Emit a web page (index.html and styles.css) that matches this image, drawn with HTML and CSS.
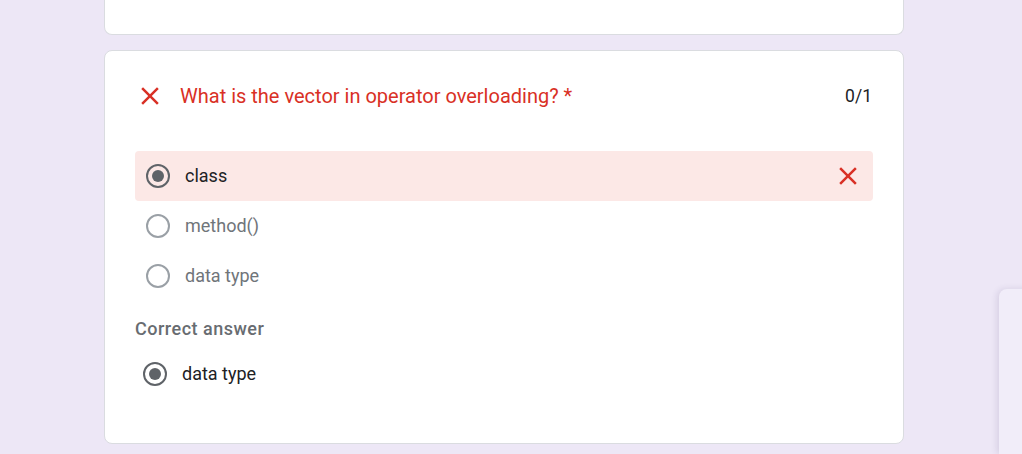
FILE: index.html
```html
<!DOCTYPE html>
<html>
<head>
<meta charset="utf-8">
<link rel="stylesheet" href="styles.css">
</head>
<body>
<div class="page">
  <div class="column">
    <div class="card card-prev"></div>
    <div class="card question">
      <div class="q-head">
        <svg class="x-icon" width="30" height="30" viewBox="0 0 24 24"><path d="M19 6.41L17.59 5 12 10.59 6.41 5 5 6.41 10.59 12 5 17.59 6.41 19 12 13.41 17.59 19 19 17.59 13.41 12z" fill="#d93025"/></svg>
        <div class="q-title">What is the vector in operator overloading? *</div>
        <div class="q-score">0/1</div>
      </div>
      <div class="options">
        <div class="opt opt-wrong">
          <span class="radio radio-on"></span>
          <span class="opt-text dark">class</span>
          <svg class="x-icon x-right" width="30" height="30" viewBox="0 0 24 24"><path d="M19 6.41L17.59 5 12 10.59 6.41 5 5 6.41 10.59 12 5 17.59 6.41 19 12 13.41 17.59 19 19 17.59 13.41 12z" fill="#d93025"/></svg>
        </div>
        <div class="opt">
          <span class="radio"></span>
          <span class="opt-text">method()</span>
        </div>
        <div class="opt">
          <span class="radio"></span>
          <span class="opt-text">data type</span>
        </div>
      </div>
      <div class="correct-label">Correct answer</div>
      <div class="correct-opt">
        <span class="radio radio-on"></span>
        <span class="opt-text dark">data type</span>
      </div>
    </div>
  </div>
  <div class="side-panel"></div>
</div>
</body>
</html>
```
FILE: styles.css
```css
* { box-sizing: border-box; }
html, body {
  margin: 0;
  padding: 0;
  background: #ede7f6;
  font-family: Roboto, "Liberation Sans", Arial, sans-serif;
  overflow: hidden;
}
.page {
  position: relative;
  width: 1022px;
  height: 454px;
  overflow: hidden;
}
.column {
  width: 800px;
  margin-left: 104px;
  display: flex;
  flex-direction: column;
  gap: 16px;
}
.card {
  background: #fff;
  border: 1px solid #dadce0;
  border-radius: 8px;
}
.card-prev {
  height: 35px;
  border-top: none;
  border-radius: 0 0 8px 8px;
}
.card-prev + .card { margin-top: -1px; }
.question {
  padding: 22px 30px 30px 30px;
  height: 394px;
}
.q-head {
  display: flex;
  align-items: center;
  height: 46px;
}
.x-icon { flex: none; width: 30px; height: 30px; }
.q-title {
  margin-left: 15px;
  color: #d93025;
  font-size: 20px;
  flex: 1;
}
.q-score {
  color: #202124;
  font-size: 17.5px;
  padding-right: 1px;
}
.options {
  margin-top: 32px;
  display: flex;
  flex-direction: column;
}
.opt {
  height: 50px;
  display: flex;
  align-items: center;
  padding-left: 11px;
  border-radius: 4px;
}
.opt-wrong { background: #fce8e6; }
.x-right { margin-left: auto; margin-right: 10px; }
.radio {
  flex: none;
  width: 24px;
  height: 24px;
  border-radius: 50%;
  border: 2px solid #9aa0a6;
  position: relative;
}
.radio-on { border-color: #5f6368; }
.radio-on::after {
  content: "";
  position: absolute;
  left: 4px; top: 4px;
  width: 12px; height: 12px;
  border-radius: 50%;
  background: #5f6368;
}
.opt-text {
  margin-left: 15px;
  margin-bottom: 2px;
  font-size: 18px;
  color: #70757a;
}
.opt-text.dark { color: #202124; }
.correct-label {
  margin-top: 17px;
  font-size: 18px;
  font-weight: 500;
  color: #686c71;
  letter-spacing: 0.5px;
}
.correct-opt {
  margin-top: 23px;
  display: flex;
  align-items: center;
  padding-left: 8px;
}
.side-panel {
  position: absolute;
  left: 999px;
  top: 289px;
  width: 60px;
  height: 165px;
  background: #f1edf9;
  border-radius: 8px 0 0 0;
  box-shadow: -2px 0 6px rgba(60, 40, 100, 0.12);
}
```
